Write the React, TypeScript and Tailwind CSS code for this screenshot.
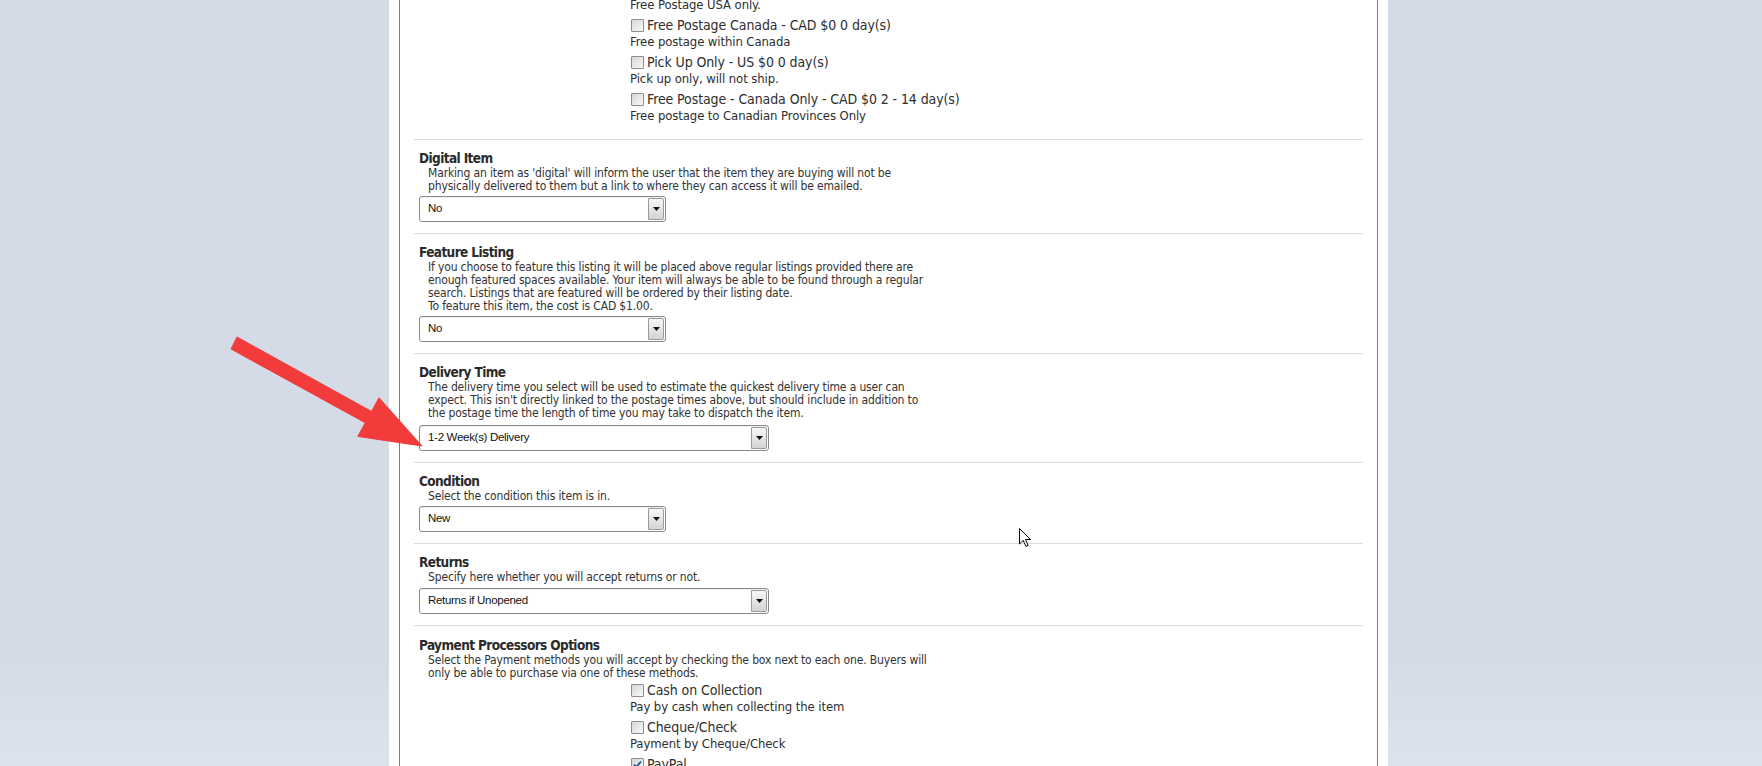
import React from "react";

const NARROW = "font-['Liberation_Sans_Narrow','DejaVu_Sans_Condensed',sans-serif]";

function Checkbox({ checked = false }: { checked?: boolean }) {
  return (
    <span className="relative inline-block w-[13px] h-[13px] shrink-0 border border-[#8d8d8d] bg-gradient-to-br from-[#d6d6d6] to-[#fafafa] rounded-[1px]">
      {checked && (
        <svg viewBox="0 0 11 11" className="absolute left-0 top-0 w-[11px] h-[11px]">
          <path d="M2 5.5 L4.3 8 L9 2.5" fill="none" stroke="#2b4f86" strokeWidth="1.8" />
        </svg>
      )}
    </span>
  );
}

function Option({ label, sub, checked = false }: { label: string; sub: string; checked?: boolean }) {
  return (
    <div className="mb-[3px]">
      <div className="flex items-center gap-[3px] h-[18px] text-[14px] leading-[18px] tracking-[-0.1px] text-[#2e2e2e] pl-[1px]">
        <Checkbox checked={checked} />
        <span>{label}</span>
      </div>
      <div className="h-[16px] text-[13px] leading-[16px] tracking-[-0.1px] text-[#2e2e2e]">{sub}</div>
    </div>
  );
}

function Select({ value, wide = false, gap = "mt-[3px]" }: { value: string; wide?: boolean; gap?: string }) {
  return (
    <div
      className={
        (wide ? "w-[350px] " : "w-[247px] ") +
        gap +
        " h-[26px] flex items-stretch border border-[#8a8a8a] rounded-[3px] bg-white shadow-[inset_0_1px_0_#f0f0f0]"
      }
    >
      <div className="flex-1 flex items-center pl-[8px] font-['Liberation_Sans',Arial,sans-serif] text-[11.5px] tracking-[-0.3px] text-[#111]">
        {value}
      </div>
      <div className="w-[16px] my-[1px] mr-[1px] flex items-center justify-center border border-[#9b9b9b] rounded-r-[2px] bg-gradient-to-b from-[#f7f7f7] to-[#d4d4d4]">
        <svg viewBox="0 0 7 4" className="w-[7px] h-[4px]">
          <path d="M0 0 L7 0 L3.5 4 Z" fill="#111" />
        </svg>
      </div>
    </div>
  );
}

function Section({
  title,
  lines,
  children,
  pad = "pt-[10px]",
}: {
  title: string;
  lines: string[];
  children?: React.ReactNode;
  pad?: string;
}) {
  return (
    <div className={"border-t border-[#d9dcdc] pb-[11px] pl-[5px] " + pad}>
      <div className="text-[13.5px] leading-[17px] font-bold text-[#2a2a2a] tracking-[-0.6px]">{title}</div>
      <div className="pl-[9px] text-[12px] leading-[13px] tracking-[-0.15px] text-[#333]">
        {lines.map((l, i) => (
          <div key={i}>{l}</div>
        ))}
      </div>
      {children}
    </div>
  );
}

export default function App() {
  return (
    <div className="relative w-[1762px] h-[766px] overflow-hidden bg-gradient-to-b from-[#d5dbe6] via-[#d5dbe6] via-85% to-[#dde3ec]">
      <div className="ml-[389px] w-[999px] h-full bg-white px-[10px]">
        <div className={"h-full border-x border-[#6e8585] px-[14px] overflow-hidden " + NARROW}>
          <div className="-mt-[3px] pl-[5px] pb-[12px]">
            <div className="ml-[211px]">
              <div className="h-[16px] text-[13px] leading-[16px] tracking-[-0.1px] text-[#2e2e2e] mb-[3px]">Free Postage USA only.</div>
              <Option label="Free Postage Canada - CAD $0 0 day(s)" sub="Free postage within Canada" />
              <Option label="Pick Up Only - US $0 0 day(s)" sub="Pick up only, will not ship." />
              <Option
                label="Free Postage - Canada Only - CAD $0 2 - 14 day(s)"
                sub="Free postage to Canadian Provinces Only"
              />
            </div>
          </div>

          <Section
            title="Digital Item"
            lines={[
              "Marking an item as 'digital' will inform the user that the item they are buying will not be",
              "physically delivered to them but a link to where they can access it will be emailed.",
            ]}
          >
            <Select value="No" />
          </Section>

          <Section
            title="Feature Listing"
            lines={[
              "If you choose to feature this listing it will be placed above regular listings provided there are",
              "enough featured spaces available. Your item will always be able to be found through a regular",
              "search. Listings that are featured will be ordered by their listing date.",
              "To feature this item, the cost is CAD $1.00.",
            ]}
          >
            <Select value="No" />
          </Section>

          <Section
            title="Delivery Time"
            lines={[
              "The delivery time you select will be used to estimate the quickest delivery time a user can",
              "expect. This isn't directly linked to the postage times above, but should include in addition to",
              "the postage time the length of time you may take to dispatch the item.",
            ]}
          >
            <Select value="1-2 Week(s) Delivery" wide gap="mt-[5px]" />
          </Section>

          <Section title="Condition" lines={["Select the condition this item is in."]}>
            <Select value="New" />
          </Section>

          <Section title="Returns" lines={["Specify here whether you will accept returns or not."]}>
            <Select value="Returns if Unopened" wide gap="mt-[4px]" />
          </Section>

          <Section
            title="Payment Processors Options"
            pad="pt-[11px]"
            lines={[
              "Select the Payment methods you will accept by checking the box next to each one. Buyers will",
              "only be able to purchase via one of these methods.",
            ]}
          >
            <div className="ml-[211px] mt-[1px]">
              <Option label="Cash on Collection" sub="Pay by cash when collecting the item" />
              <Option label="Cheque/Check" sub="Payment by Cheque/Check" />
              <Option label="PayPal" sub="Pay by PayPal" checked />
            </div>
          </Section>
        </div>
      </div>

      {/* red annotation arrow */}
      <svg className="absolute left-0 top-0 pointer-events-none" width="1762" height="766">
        <polygon
          points="237,337 371.5,411.4 379,397.8 422,446 357.8,436.4 365.3,422.8 231,349"
          fill="#f23b3b"
          stroke="#f23b3b"
          strokeWidth="1"
          strokeLinejoin="round"
        />
      </svg>

      {/* mouse cursor */}
      <svg className="absolute left-[1019px] top-[528px] pointer-events-none" width="13" height="20" viewBox="0 0 13 20">
        <path d="M0.5 0.5 L0.5 16 L4.2 12.4 L7 18.5 L9.2 17.5 L6.5 11.5 L11.5 11.5 Z" fill="#fff" stroke="#000" strokeWidth="1" strokeLinejoin="round" />
      </svg>
    </div>
  );
}
